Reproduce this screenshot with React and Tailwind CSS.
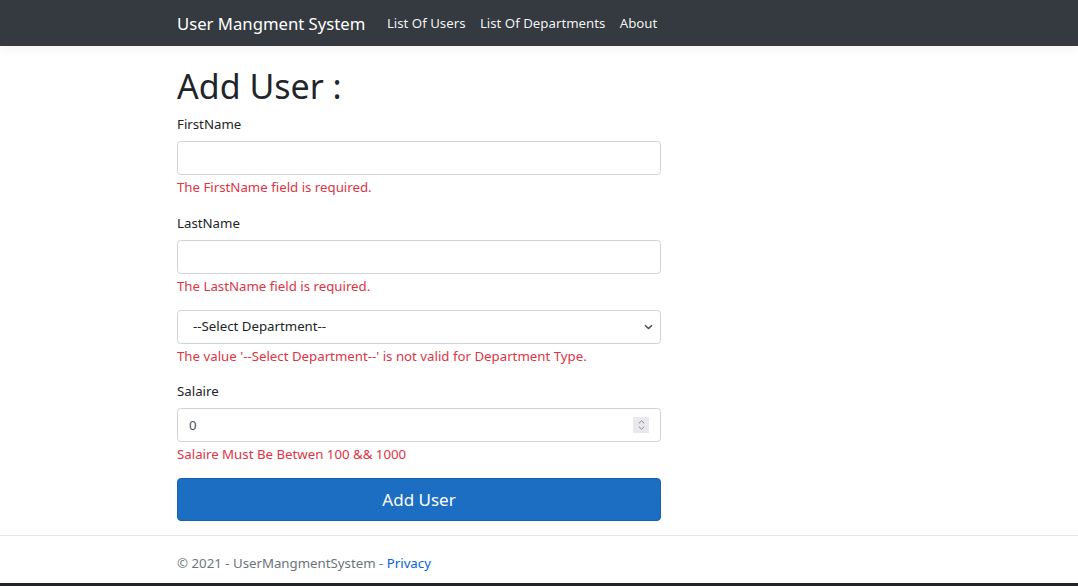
import React from "react";

function Field({ label, children, error }) {
  return (
    <div className="mb-[12.2px]">
      {label && <div className="pt-[2px] mb-[5.2px] leading-[21.6px]">{label}</div>}
      {children}
      <div className="pt-[2px] text-[#dc3545] leading-[21.6px]">{error}</div>
    </div>
  );
}

function Box({ children, className = "" }) {
  return (
    <div
      className={`h-[34px] w-full border border-[#ced4da] rounded-[3.6px] bg-white flex items-center ${className}`}
    >
      {children}
    </div>
  );
}

export default function App() {
  return (
    <div className="h-[586px] overflow-hidden flex flex-col bg-white text-[#212529] text-[13.25px] font-['Segoe_UI','Noto_Sans',sans-serif]">
      <nav className="h-[46px] shrink-0 bg-[#343a40] shadow-[0_3.6px_10.8px_rgba(0,0,0,0.05)] flex items-center pl-[177px] pt-[2px]">
        <span className="text-white text-[16.7px] mr-[14.4px]">User Mangment System</span>
        <span className="text-white/95 px-[7.2px]">List Of Users</span>
        <span className="text-white/95 px-[7.2px]">List Of Departments</span>
        <span className="text-white/95 px-[7.2px]">About</span>
      </nav>

      <main className="pl-[177px] pt-[16px] shrink-0">
        <div className="w-[484px]">
          <h1 className="text-[34px] leading-[43.2px] mt-[3px] mb-[4.2px] font-normal">Add User :</h1>

          <Field label="FirstName" error="The FirstName field is required.">
            <Box />
          </Field>
          <Field label="LastName" error="The LastName field is required.">
            <Box />
          </Field>
          <Field error="The value '--Select Department--' is not valid for Department Type.">
            <Box className="pl-[15px] pr-[6px] justify-between">
              <span className="pt-[1px]">--Select Department--</span>
              <svg width="9" height="6" viewBox="0 0 9 6" className="mr-[1px]">
                <path d="M1 1.2 L4.5 4.6 L8 1.2" fill="none" stroke="#4a4a4a" strokeWidth="1.4" />
              </svg>
            </Box>
          </Field>
          <Field label="Salaire" error="Salaire Must Be Betwen 100 && 1000">
            <Box className="pl-[11px] pr-[11px] justify-between">
              <span className="pt-[1px] text-[#495057]">0</span>
              <div className="w-[16px] h-[16px] bg-[#e9e9ed] flex flex-col items-center justify-center gap-[2px]">
                <svg width="7" height="4" viewBox="0 0 7 4">
                  <path d="M0.8 3.4 L3.5 0.8 L6.2 3.4" fill="none" stroke="#8a8a8a" strokeWidth="1" />
                </svg>
                <svg width="7" height="4" viewBox="0 0 7 4">
                  <path d="M0.8 0.6 L3.5 3.2 L6.2 0.6" fill="none" stroke="#8a8a8a" strokeWidth="1" />
                </svg>
              </div>
            </Box>
          </Field>

          <button className="w-full h-[43px] pt-[1px] bg-[#1b6ec2] border border-[#1861ac] rounded-[4px] text-white text-[17px] flex items-center justify-center">
            Add User
          </button>
        </div>
      </main>

      <footer className="mt-[14px] border-t border-[#e5e5e5] flex-1 pl-[177px] pt-[17px] text-[#6c757d]">
        <div className="leading-[21.6px]">
          © 2021 - UserMangmentSystem - <span className="text-[#0366d6]">Privacy</span>
        </div>
      </footer>
      <div className="h-[3px] shrink-0 bg-[#212529]" />
    </div>
  );
}
